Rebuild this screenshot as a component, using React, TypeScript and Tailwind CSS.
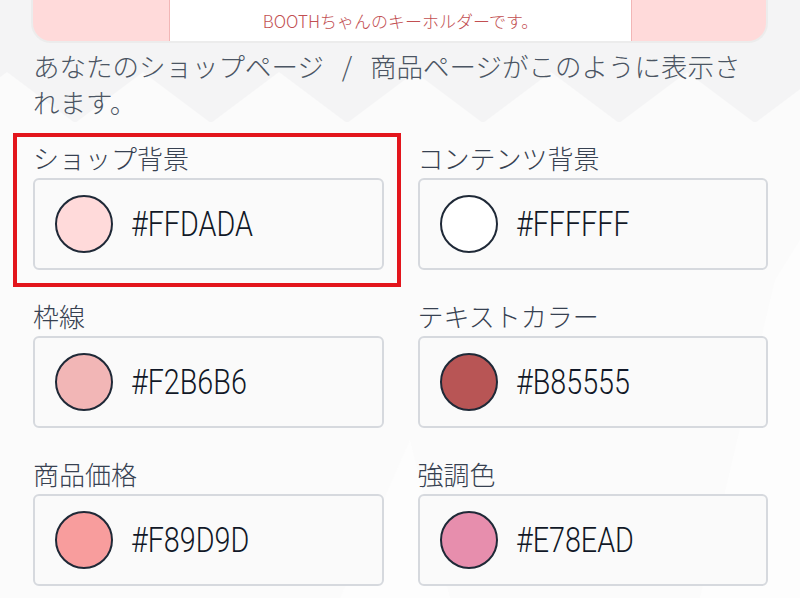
import React from "react"

const jp = "font-[family-name:'Noto_Sans_CJK_JP','Noto_Sans',sans-serif]"
const hexFont = "font-[family-name:Roboto,'Liberation_Sans',sans-serif]"

type Swatch = { label: string; hex: string }

const swatches: Swatch[] = [
  { label: "ショップ背景", hex: "#FFDADA" },
  { label: "コンテンツ背景", hex: "#FFFFFF" },
  { label: "枠線", hex: "#F2B6B6" },
  { label: "テキストカラー", hex: "#B85555" },
  { label: "商品価格", hex: "#F89D9D" },
  { label: "強調色", hex: "#E78EAD" },
]

function Backdrop() {
  // faint zigzag + diagonal bands behind the form
  const peaks = Array.from({ length: 8 }, (_, i) => i * 136 + 7)
  return (
    <svg
      className="absolute inset-0 w-full h-full pointer-events-none"
      viewBox="0 0 800 598"
      preserveAspectRatio="none"
    >
      <rect x="0" y="122" width="800" height="476" fill="#fbfbfb" />
      {peaks.map((x) => (
        <polygon key={x} points={`${x - 68},123 ${x},72 ${x + 68},123`} fill="#fbfbfb" />
      ))}
      <polygon points="700,598 775,280 800,240 800,598" fill="#fdfdfd" />
      <polygon points="340,598 410,440 450,598" fill="#fdfdfd" />
    </svg>
  )
}

function ColorField({ label, hex }: Swatch) {
  return (
    <div className="flex flex-col">
      <div className={`${jp} text-[26px] leading-[36px] font-light text-[#374151]`}>{label}</div>
      <div className="mt-[2px] h-[92px] flex items-center pl-[20px] rounded-[6px] border-2 border-[#d6d9de] bg-[#fafafa]">
        <span
          className="w-[58px] h-[58px] rounded-full border-2 border-[#1f2937] shrink-0"
          style={{ backgroundColor: hex }}
        />
        <span
          className={`${hexFont} ml-[18px] text-[35px] leading-none font-light text-[#111827] scale-x-[0.82] origin-left`}
        >
          {hex}
        </span>
      </div>
    </div>
  )
}

export default function App() {
  return (
    <div className="relative w-[800px] h-[598px] overflow-hidden bg-[#f4f4f5]">
      <Backdrop />

      <div className="relative pl-[33px] pr-[32px]">
        {/* bottom of the shop preview card */}
        <div className="flex h-[43px] rounded-b-[20px] border-2 border-t-0 border-[#ececec] bg-[#ffdada] overflow-hidden -ml-[2px]">
          <div className="w-[136px]" />
          <div className="flex-1 bg-white border-x border-[#f2b6b6] flex items-start justify-center pt-[9px]">
            <span className={`${jp} text-[17px] leading-[24px] font-light text-[#c24f52]`}>
              BOOTHちゃんのキーホルダーです。
            </span>
          </div>
          <div className="w-[134px]" />
        </div>

        <p className={`${jp} mt-[5px] text-[26.5px] leading-[36px] font-light text-[#4b5563]`}>
          あなたのショップページ
          <span className="inline-block w-[46px] text-center">/</span>
          商品ページがこのように表示さ
          <br />
          れます。
        </p>

        <div className="mt-[20px] grid grid-cols-2 gap-x-[34px] gap-y-[28px]">
          {swatches.map((s) => (
            <ColorField key={s.label} {...s} />
          ))}
        </div>
      </div>

      {/* highlight annotation */}
      <div className="absolute left-[13px] top-[133px] w-[388px] h-[154px] border-4 border-[#e3151c]" />
    </div>
  )
}
